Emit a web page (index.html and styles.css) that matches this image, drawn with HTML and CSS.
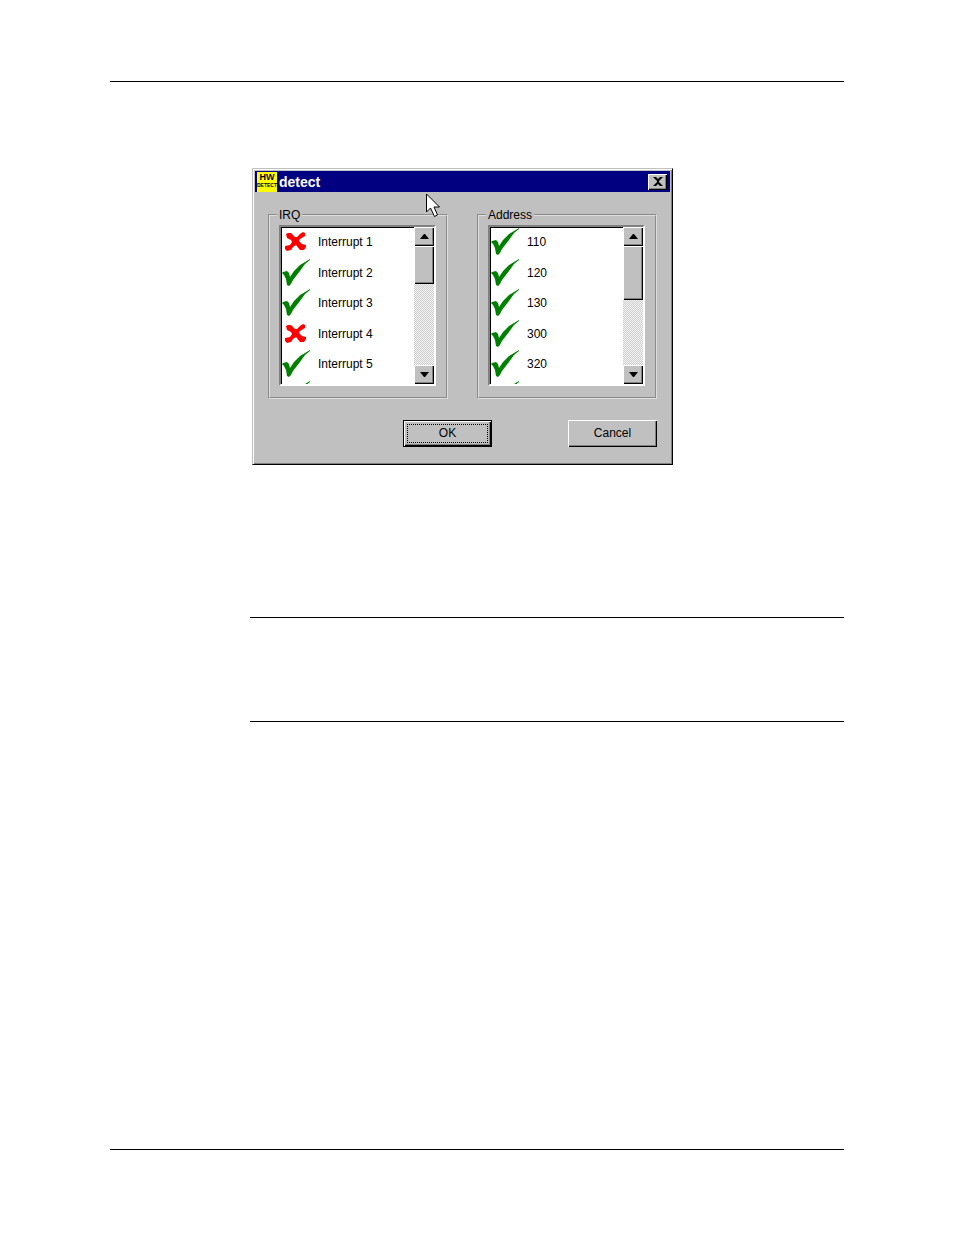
FILE: index.html
```html
<!DOCTYPE html>
<html lang="en">
  <head>
    <meta charset="UTF-8" />
    <meta name="viewport" content="width=device-width, initial-scale=1.0" />
    <title>detect</title>
    <link rel="stylesheet" href="styles.css">
  </head>
  <body>
    <!-- shared icons -->
    <svg class="defs" aria-hidden="true">
      <symbol id="check" viewBox="0 0 29 28">
        <path fill="#008000" d="M0 14L1 13L5 12L7 14L8 18L12 12L18 6L28 0V1L23 5L18 12L11 21L9 25L7 27L5 26L4 20L2 16Z" />
      </symbol>
      <symbol id="cross" viewBox="0 0 29 28">
        <path fill="#f00" d="M4 6L6 5L9 5L13 9L15 9L18 6L21 4L23 5L23 8L18 11L17 13L20 16L24 17L24 19L22 22L18 22L14 17L11 19L9 22L5 23L3 21L3 18L8 17L10 14L9 12L5 10Z" />
      </symbol>
      <symbol id="up" viewBox="0 0 9 5">
        <path d="M0 5L4 0H5L9 5Z" />
      </symbol>
      <symbol id="down" viewBox="0 0 9 5">
        <path d="M0 0H9L5 5H4Z" />
      </symbol>
    </svg>

    <div class="page">
      <hr class="rule" />
      <main class="content">
        <div class="dialog" role="dialog" aria-labelledby="title">
          <div class="titlebar">
            <svg class="logo" viewBox="0 0 20 20" aria-hidden="true">
              <rect width="20" height="20" fill="#ff0" />
              <text class="logo-hw" x="10" y="8" text-anchor="middle">HW</text>
              <text class="logo-detect" x="10" y="15" text-anchor="middle">DETECT</text>
            </svg>
            <h1 class="title" id="title">detect</h1>
            <button class="close" type="button" aria-label="Close">
              <svg viewBox="0 0 10 9"><path d="M0 0H3L5 2L7 0H10L6 4V5L10 9H7L5 7L3 9H0L4 5V4Z" /></svg>
            </button>
          </div>

          <form class="form">
            <div class="groups">
              <fieldset class="group">
                <legend>IRQ</legend>
                <div class="listbox">
                  <ul class="list">
                    <li class="item"><svg><use href="#cross" /></svg>Interrupt 1</li>
                    <li class="item"><svg><use href="#check" /></svg>Interrupt 2</li>
                    <li class="item"><svg><use href="#check" /></svg>Interrupt 3</li>
                    <li class="item"><svg><use href="#cross" /></svg>Interrupt 4</li>
                    <li class="item"><svg><use href="#check" /></svg>Interrupt 5</li>
                    <li class="item"><svg><use href="#check" /></svg></li>
                  </ul>
                  <div class="scrollbar">
                    <button class="arrow" type="button" aria-label="Scroll up"><svg><use href="#up" /></svg></button>
                    <div class="thumb"></div>
                    <button class="arrow last" type="button" aria-label="Scroll down"><svg><use href="#down" /></svg></button>
                  </div>
                </div>
              </fieldset>

              <fieldset class="group">
                <legend>Address</legend>
                <div class="listbox">
                  <ul class="list">
                    <li class="item"><svg><use href="#check" /></svg>110</li>
                    <li class="item"><svg><use href="#check" /></svg>120</li>
                    <li class="item"><svg><use href="#check" /></svg>130</li>
                    <li class="item"><svg><use href="#check" /></svg>300</li>
                    <li class="item"><svg><use href="#check" /></svg>320</li>
                    <li class="item"><svg><use href="#check" /></svg></li>
                  </ul>
                  <div class="scrollbar">
                    <button class="arrow" type="button" aria-label="Scroll up"><svg><use href="#up" /></svg></button>
                    <div class="thumb long"></div>
                    <button class="arrow last" type="button" aria-label="Scroll down"><svg><use href="#down" /></svg></button>
                  </div>
                </div>
              </fieldset>
            </div>

            <div class="buttons">
              <button class="btn default" type="button"><span>OK</span></button>
              <button class="btn" type="button"><span>Cancel</span></button>
            </div>
          </form>

          <svg class="cursor" viewBox="0 0 14 25" aria-hidden="true">
            <path fill="#fff" stroke="#000" d="M0.500 1V19L4.500 15L8.500 23.500L11.500 22L8 14H13.500Z" />
          </svg>
        </div>

        <section class="note"></section>
      </main>
      <hr class="rule" />
    </div>
  </body>
</html>
```

FILE: styles.css
```css
* {
  margin: 0;
  padding: 0;
  box-sizing: border-box;
}

body {
  background: #fff;
  color: #000;
  font: 12px/14px "Liberation Sans", Arial, sans-serif;
}

ul {
  list-style: none;
}

button {
  font: inherit;
  color: inherit;
  background: #c0c0c0;
  border: 0;
}

svg {
  display: block;
  flex: none;
}

.defs {
  position: absolute;
  width: 0;
  height: 0;
}

.page {
  min-height: 100vh;
  padding: 81px 110px 85px;
  display: flex;
  flex-direction: column;
}

.rule {
  border: 0;
  height: 1px;
  background: #000;
}

.content {
  flex: 1;
  padding: 86px 0 0 140px;
}

.note {
  margin-top: 152px;
  height: 105px;
  border-top: 1px solid #000;
  border-bottom: 1px solid #000;
}

/* dialog window */
.dialog {
  position: relative;
  width: 421px;
  max-width: 100%;
  margin-left: 2px;
  padding: 2px;
  background: #c0c0c0;
  border: 1px solid;
  border-color: #c0c0c0 #000 #000 #c0c0c0;
  box-shadow: inset 1px 1px #fff, inset -1px -1px #808080;
}

.titlebar {
  display: flex;
  align-items: center;
  height: 21px;
  padding: 0 3px 0 2px;
  background: #000080;
}

.logo {
  width: 20px;
  height: 20px;
}

.logo-hw {
  font-size: 9px;
  font-weight: bold;
}

.logo-detect {
  font-size: 5px;
  font-weight: bold;
}

.title {
  flex: 1;
  padding-left: 2px;
  color: #fff;
  font-size: 14px;
  line-height: 20px;
}

.close {
  display: grid;
  place-items: center;
  width: 19px;
  height: 16px;
}

.close svg {
  width: 10px;
  height: 9px;
}

.close,
.arrow,
.thumb,
.btn {
  background: #c0c0c0;
  box-shadow: inset 1px 1px #fff, inset -1px -1px #000, inset -2px -2px #808080;
}

.form {
  padding: 16px 13px 15px;
}

.groups {
  display: grid;
  grid-template-columns: 1fr 1fr;
  gap: 29px;
}

.group {
  min-width: 0;
  padding: 3px 10px 11px 9px;
  border: 2px groove #fff;
  border-color: #dfdfdf;
}

.group legend {
  padding: 0 2px;
  margin-left: -2px;
}

/* list with its own scrollbar */
.listbox {
  display: flex;
  height: 161px;
  background: #fff;
  border: 2px solid;
  border-color: #808080 #fff #fff #808080;
  box-shadow: inset 1px 1px #000;
  overflow: hidden;
}

.list {
  flex: 1;
  overflow: hidden;
}

.item {
  display: flex;
  align-items: center;
  gap: 7px;
  height: 30px;
  padding-left: 1px;
}

.item:nth-child(even) {
  height: 31px;
}

.item svg {
  width: 29px;
  height: 28px;
}

.scrollbar {
  display: flex;
  flex-direction: column;
  width: 20px;
  background: repeating-conic-gradient(#ccc 0 25%, #f4f4f4 0 50%) 0 0 / 2px 2px;
}

.arrow {
  display: grid;
  place-items: center;
  height: 19px;
}

.arrow svg {
  width: 9px;
  height: 5px;
}

.arrow.last {
  margin-top: auto;
}

.thumb {
  height: 38px;
}

.thumb.long {
  height: 54px;
}

.buttons {
  display: flex;
  justify-content: flex-end;
  gap: 76px;
  padding-top: 21px;
}

.btn {
  width: 89px;
  height: 27px;
  padding: 4px;
}

.btn span {
  display: block;
  line-height: 19px;
}

.btn.default {
  border: 1px solid #000;
  padding: 3px;
}

.btn.default span {
  border: 1px dotted #000;
  line-height: 17px;
}

.cursor {
  position: absolute;
  left: 173px;
  top: 24px;
  width: 14px;
  height: 25px;
}
```
